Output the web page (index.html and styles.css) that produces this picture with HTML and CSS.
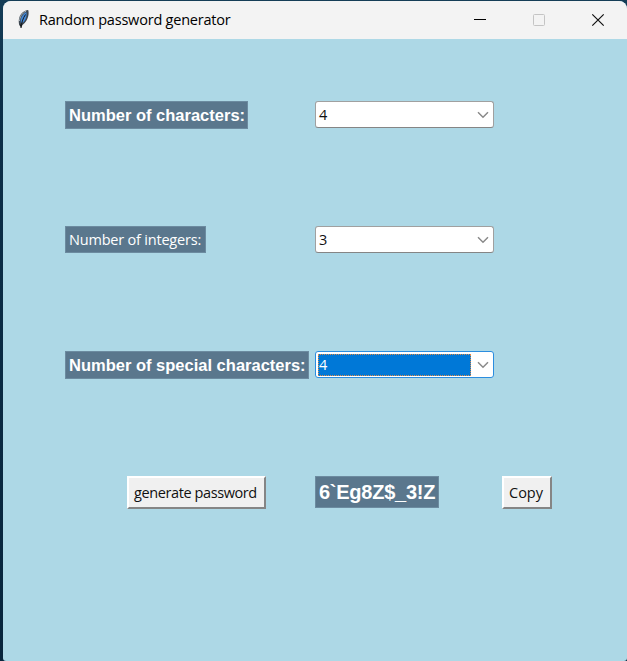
FILE: index.html
```html
<!DOCTYPE html>
<html lang="en">
<head>
<meta charset="utf-8">
<title>Random password generator</title>
<link rel="stylesheet" href="styles.css">
</head>
<body>
<div class="window">
  <header class="titlebar">
    <svg class="feather" width="14" height="22" viewBox="0 0 14 22">
      <path d="M2.400 16.500C0.900 12 2 6.500 5.500 3.500C7.500 1.800 9.500 0.900 11.200 1C12.400 4.500 11 10.500 7.700 14L4.300 17Z" fill="#3c4650"/>
      <path d="M3.800 14C3.300 9.500 5 5.500 9.300 3C10.300 6.500 9 10.500 6.500 13.200Z" fill="#4388d8"/>
      <path d="M2.500 12C2.800 8 4.700 4.300 9.200 2.100" fill="none" stroke="#aab4bb"/>
      <path d="M4 19C4.200 14.500 6 9 8.500 5.500" fill="none" stroke="#15191d"/>
      <path d="M2.600 15.500L4 19L5.500 15.500Z" fill="#15191d"/>
    </svg>
    <span class="title">Random password generator</span>
    <div class="controls">
      <svg width="14" height="14" viewBox="0 0 14 14"><path d="M1 6.500H13" stroke="#000"/></svg>
      <svg width="14" height="14" viewBox="0 0 14 14"><rect x="1.500" y="1.500" width="11" height="11" rx="1" fill="none" stroke="#c4c4c4"/></svg>
      <svg width="14" height="14" viewBox="0 0 14 14"><path d="M1.300 1.300L12.700 12.700M12.700 1.300L1.300 12.700" stroke="#111" stroke-width="1.200"/></svg>
    </div>
  </header>
  <main class="form">
    <div class="row">
      <div class="label l-chars">Number of characters:</div>
      <div class="combo"><span class="value">4</span><svg class="chevron" width="12" height="8" viewBox="0 0 12 8"><path d="M1 1.300L6 6.300L11 1.300"/></svg></div>
    </div>
    <div class="row">
      <div class="label light">Number of integers:</div>
      <div class="combo"><span class="value">3</span><svg class="chevron" width="12" height="8" viewBox="0 0 12 8"><path d="M1 1.300L6 6.300L11 1.300"/></svg></div>
    </div>
    <div class="row">
      <div class="label l-special">Number of special characters:</div>
      <div class="combo focused"><span class="value">4</span><svg class="chevron" width="12" height="8" viewBox="0 0 12 8"><path d="M1 1.300L6 6.300L11 1.300"/></svg></div>
    </div>
    <div class="actions">
      <button class="button generate">generate password</button>
      <div class="password">6`Eg8Z$_3!Z</div>
      <button class="button copy">Copy</button>
    </div>
  </main>
</div>
</body>
</html>
```
FILE: styles.css
```css
* { box-sizing: border-box; }
html, body { height: 100%; margin: 0; }
body {
  padding: 1px 0 0 3px;
  overflow: hidden;
  background: linear-gradient(#153d57, #0c2f49 100px, #08253c);
}
.window {
  height: 660px;
  border-radius: 8px 8px 3px 3px;
  overflow: hidden;
  background: #add8e6;
  font-family: "Noto Sans", sans-serif;
}
.titlebar {
  height: 38px;
  display: flex;
  align-items: center;
  padding-left: 14px;
  background: #f3f3f3;
  color: #000;
}
.title {
  margin-left: 8px;
  font-family: "Open Sans", sans-serif;
  font-size: 14.500px;
  line-height: 20px;
  letter-spacing: -0.210px;
  white-space: nowrap;
}
.controls { display: flex; gap: 45px; margin-left: auto; padding-right: 22px; }
.controls svg { display: block; }
.form { padding: 62px 0 0 62px; }
.row { display: grid; grid-template-columns: 250px 179px; height: 125px; align-items: start; }
.label, .password {
  background: #5a778d;
  border: 1px solid #6c8ba0;
  color: #fff;
  padding-left: 3px;
  font-family: "Liberation Sans", sans-serif;
  font-weight: bold;
  white-space: nowrap;
}
.label { height: 28px; font-size: 16.500px; line-height: 27px; }
.l-chars { width: 183px; }
.l-special { width: 244px; }
.label.light {
  width: 141px;
  height: 27px;
  font-family: "Open Sans", sans-serif;
  font-size: 14.500px;
  font-weight: 400;
  line-height: 25px;
  letter-spacing: -0.200px;
}
.combo {
  display: flex;
  align-items: center;
  height: 27px;
  padding: 2px 4px 2px 2px;
  border: 1px solid #a0a0a0;
  border-bottom-color: #858585;
  border-radius: 3px;
  background: #fff;
  color: #111;
  font-family: "Open Sans", sans-serif;
  font-size: 14.500px;
}
.value { width: 153px; height: 22px; line-height: 22px; padding-left: 1px; }
.chevron { margin-left: 6px; flex: none; fill: none; stroke: #8a8a8a; stroke-width: 1.500; }
.focused { border-color: #2b8ddf; }
.focused .value {
  background: #0078d7;
  color: #fff;
  border: 1px dotted #d78b4d;
  line-height: 20px;
  padding-left: 0;
}
.actions {
  display: grid;
  grid-template-columns: 188px 187px 50px;
  padding-left: 62px;
  align-items: start;
}
.button {
  height: 33px;
  padding: 0 0 0 5px;
  text-align: left;
  border: 2px solid;
  border-color: #fff #858585 #858585 #fff;
  background: #f0f0f0;
  color: #111;
  font-family: "Open Sans", sans-serif;
  font-size: 14.500px;
  line-height: 28px;
  white-space: nowrap;
}
.generate { width: 139px; letter-spacing: -0.400px; }
.copy { width: 50px; }
.password { width: 124px; height: 32px; font-size: 20px; line-height: 30px; letter-spacing: -0.250px; }
```
